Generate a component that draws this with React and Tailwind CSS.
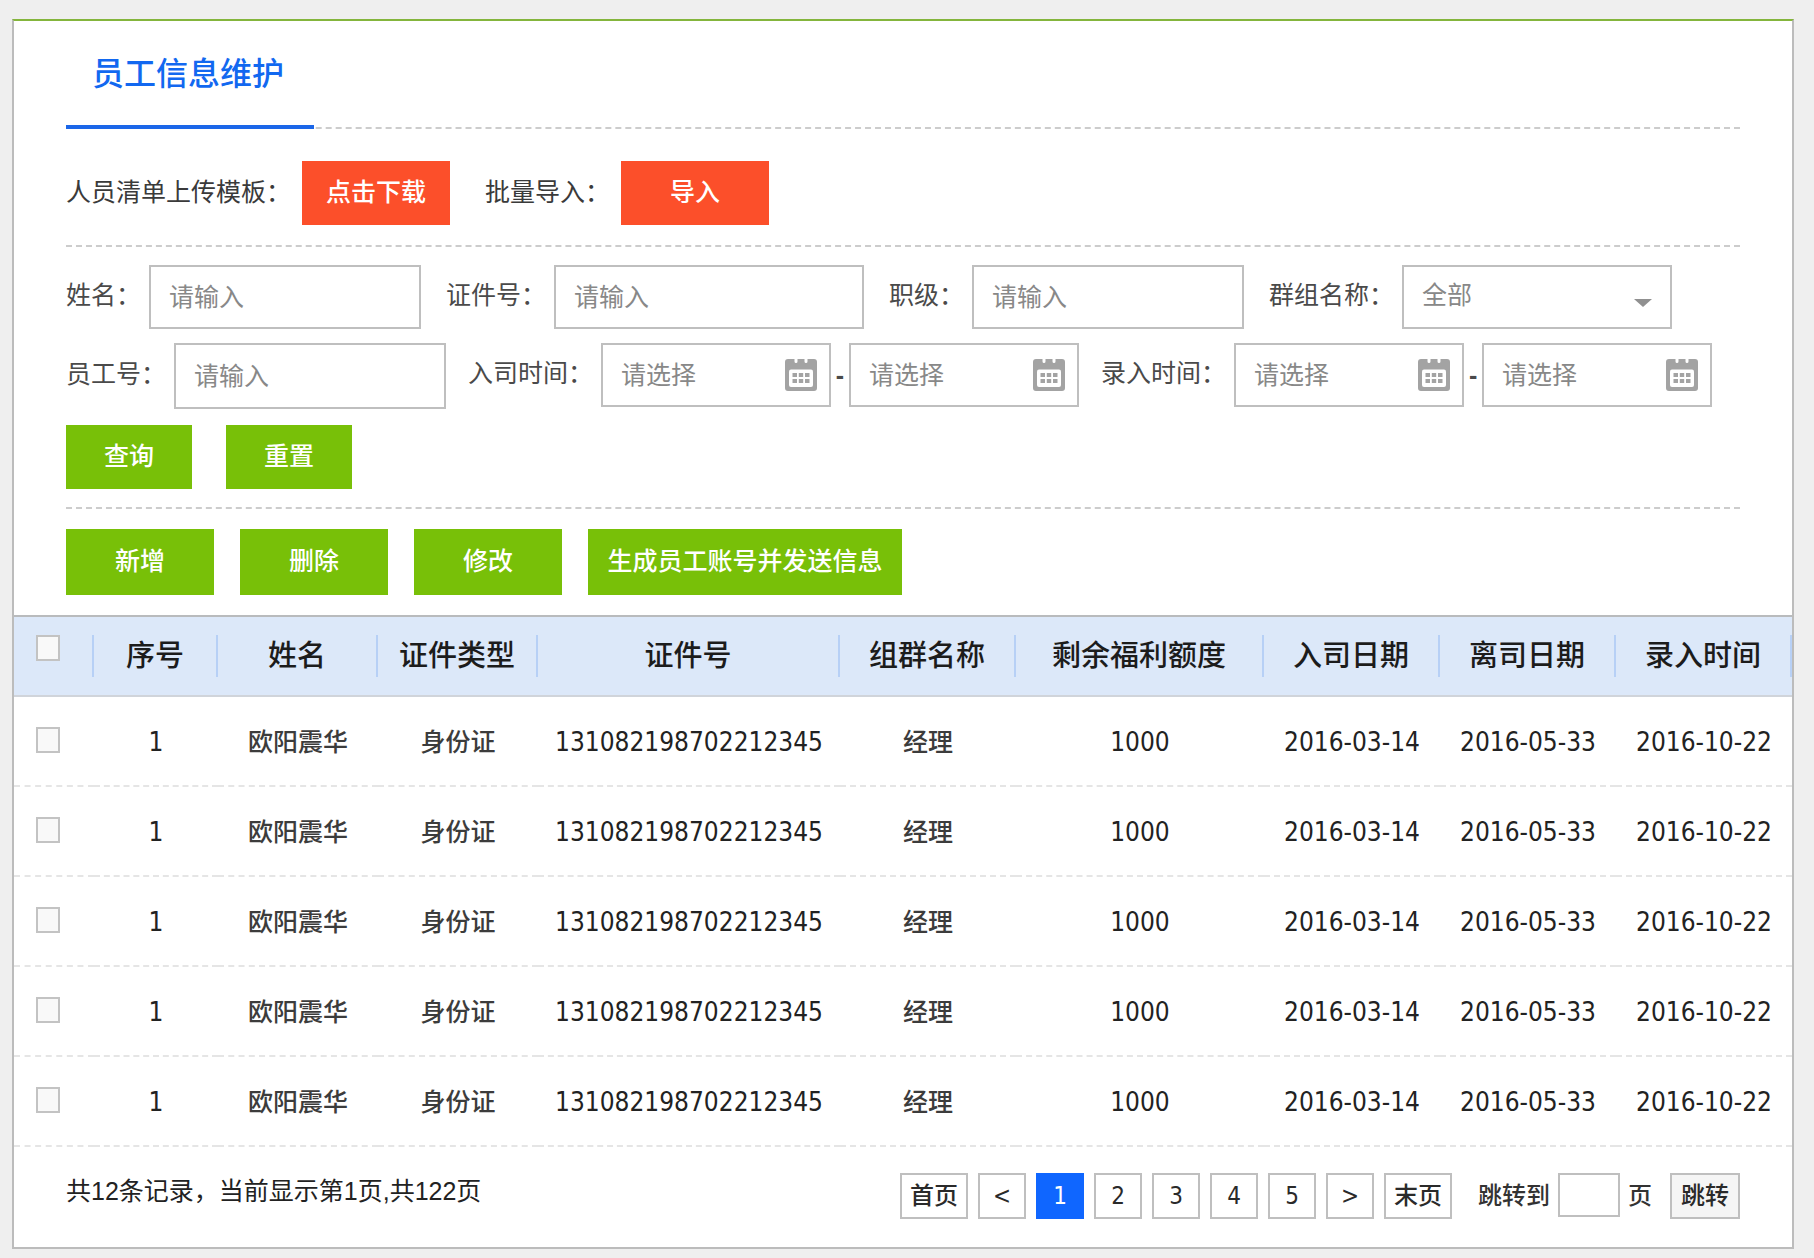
import { useState } from 'react'
import clsx from 'clsx'

const COLUMNS = [
  { key: 'seq', title: '序号', width: 'w-[124px]', numeric: true },
  { key: 'name', title: '姓名', width: 'w-[160px]' },
  { key: 'idType', title: '证件类型', width: 'w-[160px]' },
  { key: 'idNumber', title: '证件号', width: 'w-[302px]', numeric: true },
  { key: 'group', title: '组群名称', width: 'w-[176px]' },
  { key: 'balance', title: '剩余福利额度', width: 'w-[248px]', numeric: true },
  { key: 'joined', title: '入司日期', width: 'w-[176px]', numeric: true },
  { key: 'left', title: '离司日期', width: 'w-[176px]', numeric: true },
  { key: 'created', title: '录入时间', width: 'w-[176px]', numeric: true },
]

const EMPLOYEE = {
  seq: 1,
  name: '欧阳震华',
  idType: '身份证',
  idNumber: '131082198702212345',
  group: '经理',
  balance: 1000,
  joined: '2016-03-14',
  left: '2016-05-33',
  created: '2016-10-22',
}

const ROWS = [1, 2, 3, 4, 5].map((id) => ({ ...EMPLOYEE, id }))

const PAGES = [1, 2, 3, 4, 5]

function CalendarIcon() {
  return (
    <svg viewBox="0 0 32 32" className="size-8 shrink-0" aria-hidden="true">
      <path
        fill="#a3a3a3"
        d="M3 0h6.500v2.500a1.500 1.500 0 0 0 3 0V0h7v2.500a1.500 1.500 0 0 0 3 0V0H29a3 3 0 0 1 3 3v26a3 3 0 0 1-3 3H3a3 3 0 0 1-3-3V3a3 3 0 0 1 3-3z"
      />
      <rect x="4" y="10.500" width="24" height="17.500" rx="2" fill="#fff" />
      <path
        fill="#a3a3a3"
        d="M7.500 14h4.500v4H7.500zM13.800 14h4.400v4h-4.400zM20 14h4.500v4H20zM7.500 20h4.500v4H7.500zM13.800 20h4.400v4h-4.400zM20 20h4.500v4H20z"
      />
    </svg>
  )
}

function Label({ htmlFor, children }) {
  return (
    <label htmlFor={htmlFor} className="pb-1 text-[#4a4a4a]">
      {children}
    </label>
  )
}

function TextField({ id, label, className }) {
  return (
    <div className="flex items-center gap-2">
      <Label htmlFor={id}>{label}</Label>
      <input
        id={id}
        type="text"
        placeholder="请输入"
        className={clsx('border-2 border-[#bfbfbf] bg-white px-[18px] placeholder:text-[#888]', className)}
      />
    </div>
  )
}

function DateField({ id, label }) {
  return (
    <div className="flex h-16 w-[230px] items-center border-2 border-[#bfbfbf] bg-white pr-3 pl-[18px]">
      <input
        id={id}
        type="text"
        aria-label={label}
        placeholder="请选择"
        className="min-w-0 flex-1 placeholder:text-[#888]"
      />
      <CalendarIcon />
    </div>
  )
}

function DateRange({ id, label }) {
  return (
    <div className="flex items-center">
      <div className="mr-2 flex">
        <Label htmlFor={`${id}-start`}>{label}</Label>
      </div>
      <DateField id={`${id}-start`} />
      <span className="w-[18px] text-center font-bold text-[#4a4a4a]">-</span>
      <DateField id={`${id}-end`} label="结束时间" />
    </div>
  )
}

function GreenButton({ className, children }) {
  return (
    <button type="button" className={clsx('bg-[#78c008] pb-0.5 font-medium text-white', className)}>
      {children}
    </button>
  )
}

function RedButton({ children }) {
  return (
    <button type="button" className="h-16 w-[148px] bg-[#fc4f2a] pb-0.5 font-medium text-white">
      {children}
    </button>
  )
}

function CheckBox({ label }) {
  return (
    <input
      type="checkbox"
      aria-label={label}
      className="block h-[26px] w-6 appearance-none border-2 border-[#c3c3c3] bg-[#f9f9f9] checked:bg-[#0f66ff]"
    />
  )
}

function PageButton({ active, className, children, ...props }) {
  return (
    <button
      type="button"
      className={clsx(
        'h-[46px] border-2',
        active ? 'border-[#0f66ff] bg-[#0f66ff] text-white' : 'border-[#bfbfbf] text-[#2a2a2a]',
        className
      )}
      {...props}
    >
      {children}
    </button>
  )
}

function EmployeeTable() {
  return (
    <table className="w-full table-fixed border-separate border-spacing-0 border-t-2 border-[#b9bbbd] font-medium">
      <thead className="bg-[#dce8f9] text-[29px] text-[#1c1c1c]">
        <tr>
          <th className="h-20 w-[80px] border-b-2 border-[#d0d4da] p-0">
            <div className="flex h-[42px] items-start border-r-2 border-[#b7d0f6] pl-[22px]">
              <CheckBox label="全选" />
            </div>
          </th>
          {COLUMNS.map((col) => (
            <th key={col.key} className={clsx('h-20 border-b-2 border-[#d0d4da] p-0 font-medium', col.width)}>
              <div className="flex h-[42px] items-center justify-center border-r-2 border-[#b7d0f6]">
                {col.title}
              </div>
            </th>
          ))}
        </tr>
      </thead>
      <tbody className="text-[#3c3c3c]">
        {ROWS.map((row) => (
          <tr key={row.id}>
            <td className="h-[90px] border-b-2 border-dashed border-[#e5e5e5] p-0 pb-0.5 pl-[22px]">
              <CheckBox label={`选择第${row.id}行`} />
            </td>
            {COLUMNS.map((col) => (
              <td
                key={col.key}
                className={clsx(
                  'h-[90px] border-b-2 border-dashed border-[#e5e5e5] p-0 pt-0.5 text-center',
                  col.numeric &&
                    'font-["DejaVu_Sans_Condensed","Noto_Sans_CJK_SC",sans-serif] text-[26px] font-normal text-[#222]'
                )}
              >
                {row[col.key]}
              </td>
            ))}
          </tr>
        ))}
      </tbody>
    </table>
  )
}

function Pagination() {
  const [page, setPage] = useState(1)

  return (
    <nav className="flex items-start gap-[10px] font-['DejaVu_Sans_Condensed','Noto_Sans_CJK_SC',sans-serif] text-[24px] font-medium text-[#333]">
      <PageButton className="w-[68px]" onClick={() => setPage(1)}>首页</PageButton>
      <PageButton className="w-12" onClick={() => setPage(Math.max(1, page - 1))}>&lt;</PageButton>
      {PAGES.map((n) => (
        <PageButton key={n} className="w-12" active={n === page} onClick={() => setPage(n)}>
          {n}
        </PageButton>
      ))}
      <PageButton className="w-12" onClick={() => setPage(Math.min(5, page + 1))}>&gt;</PageButton>
      <PageButton className="w-[68px]" onClick={() => setPage(5)}>末页</PageButton>
      <div className="flex items-start gap-2 pl-4">
        <label htmlFor="jump" className="leading-[46px]">跳转到</label>
        <input id="jump" type="text" className="h-11 w-[62px] border-2 border-[#bfbfbf] bg-white px-2" />
        <span className="leading-[46px]">页</span>
      </div>
      <PageButton className="ml-2 w-[70px] bg-[#f5f5f5]">跳转</PageButton>
    </nav>
  )
}

export default function App() {
  return (
    <div className="min-h-screen bg-[#efefef] pt-[19px] pr-5 pb-[9px] pl-3 font-['Liberation_Sans','Noto_Sans_CJK_SC',sans-serif] text-[25px] leading-9">
      <main className="border-2 border-[#bcbcbc] border-t-[#84b53c] bg-white">
        <div className="px-[52px]">
          <header className="flex border-b-2 border-dashed border-[#ccc]">
            <h1 className="-mb-[2px] flex h-[108px] w-[248px] items-center border-b-4 border-[#1b66e8] pt-0.5 pl-[26px] text-[32px] font-medium text-[#1268f0]">
              员工信息维护
            </h1>
          </header>

          <section className="flex flex-wrap items-center gap-x-[35px] gap-y-4 border-b-2 border-dashed border-[#ccc] pt-8 pb-5">
            <div className="flex items-center gap-[11px] text-[#3a3a3a]">
              <span className="pb-0.5">人员清单上传模板：</span>
              <RedButton>点击下载</RedButton>
            </div>
            <div className="flex items-center gap-[11px] text-[#3a3a3a]">
              <span className="pb-0.5">批量导入：</span>
              <RedButton>导入</RedButton>
            </div>
          </section>

          <form className="border-b-2 border-dashed border-[#ccc] py-[18px]" onSubmit={(e) => e.preventDefault()}>
            <div className="flex flex-wrap items-center gap-x-[25px] gap-y-3">
              <TextField id="name" label="姓名：" className="h-16 w-[272px]" />
              <TextField id="id-number" label="证件号：" className="h-16 w-[310px]" />
              <TextField id="rank" label="职级：" className="h-16 w-[272px]" />
              <div className="flex items-center gap-2">
                <Label htmlFor="group">群组名称：</Label>
                <div className="relative">
                  <select
                    id="group"
                    className="block h-16 w-[270px] appearance-none border-2 border-[#bfbfbf] bg-white px-[18px] pb-1 text-[#888]"
                  >
                    <option>全部</option>
                  </select>
                  <svg viewBox="0 0 18 8" className="pointer-events-none absolute right-5 bottom-[22px] h-2 w-[18px]" aria-hidden="true">
                    <path d="M0 0h18L9 8z" fill="#909090" />
                  </svg>
                </div>
              </div>
            </div>

            <div className="mt-[14px] flex flex-wrap items-start gap-x-[22px] gap-y-3">
              <TextField id="staff-no" label="员工号：" className="h-[66px] w-[272px]" />
              <DateRange id="joined" label="入司时间：" />
              <DateRange id="created" label="录入时间：" />
            </div>

            <div className="mt-4 flex gap-[34px]">
              <GreenButton className="h-16 w-[126px]">查询</GreenButton>
              <GreenButton className="h-16 w-[126px]">重置</GreenButton>
            </div>
          </form>

          <div className="flex flex-wrap gap-[26px] py-5">
            <GreenButton className="h-[66px] w-[148px]">新增</GreenButton>
            <GreenButton className="h-[66px] w-[148px]">删除</GreenButton>
            <GreenButton className="h-[66px] w-[148px]">修改</GreenButton>
            <GreenButton className="h-[66px] w-[314px]">生成员工账号并发送信息</GreenButton>
          </div>
        </div>

        <EmployeeTable />

        <footer className="flex items-start justify-between px-[52px] pt-[26px] pb-7">
          <p className="text-[#222]">共12条记录，当前显示第1页,共122页</p>
          <Pagination />
        </footer>
      </main>
    </div>
  )
}
